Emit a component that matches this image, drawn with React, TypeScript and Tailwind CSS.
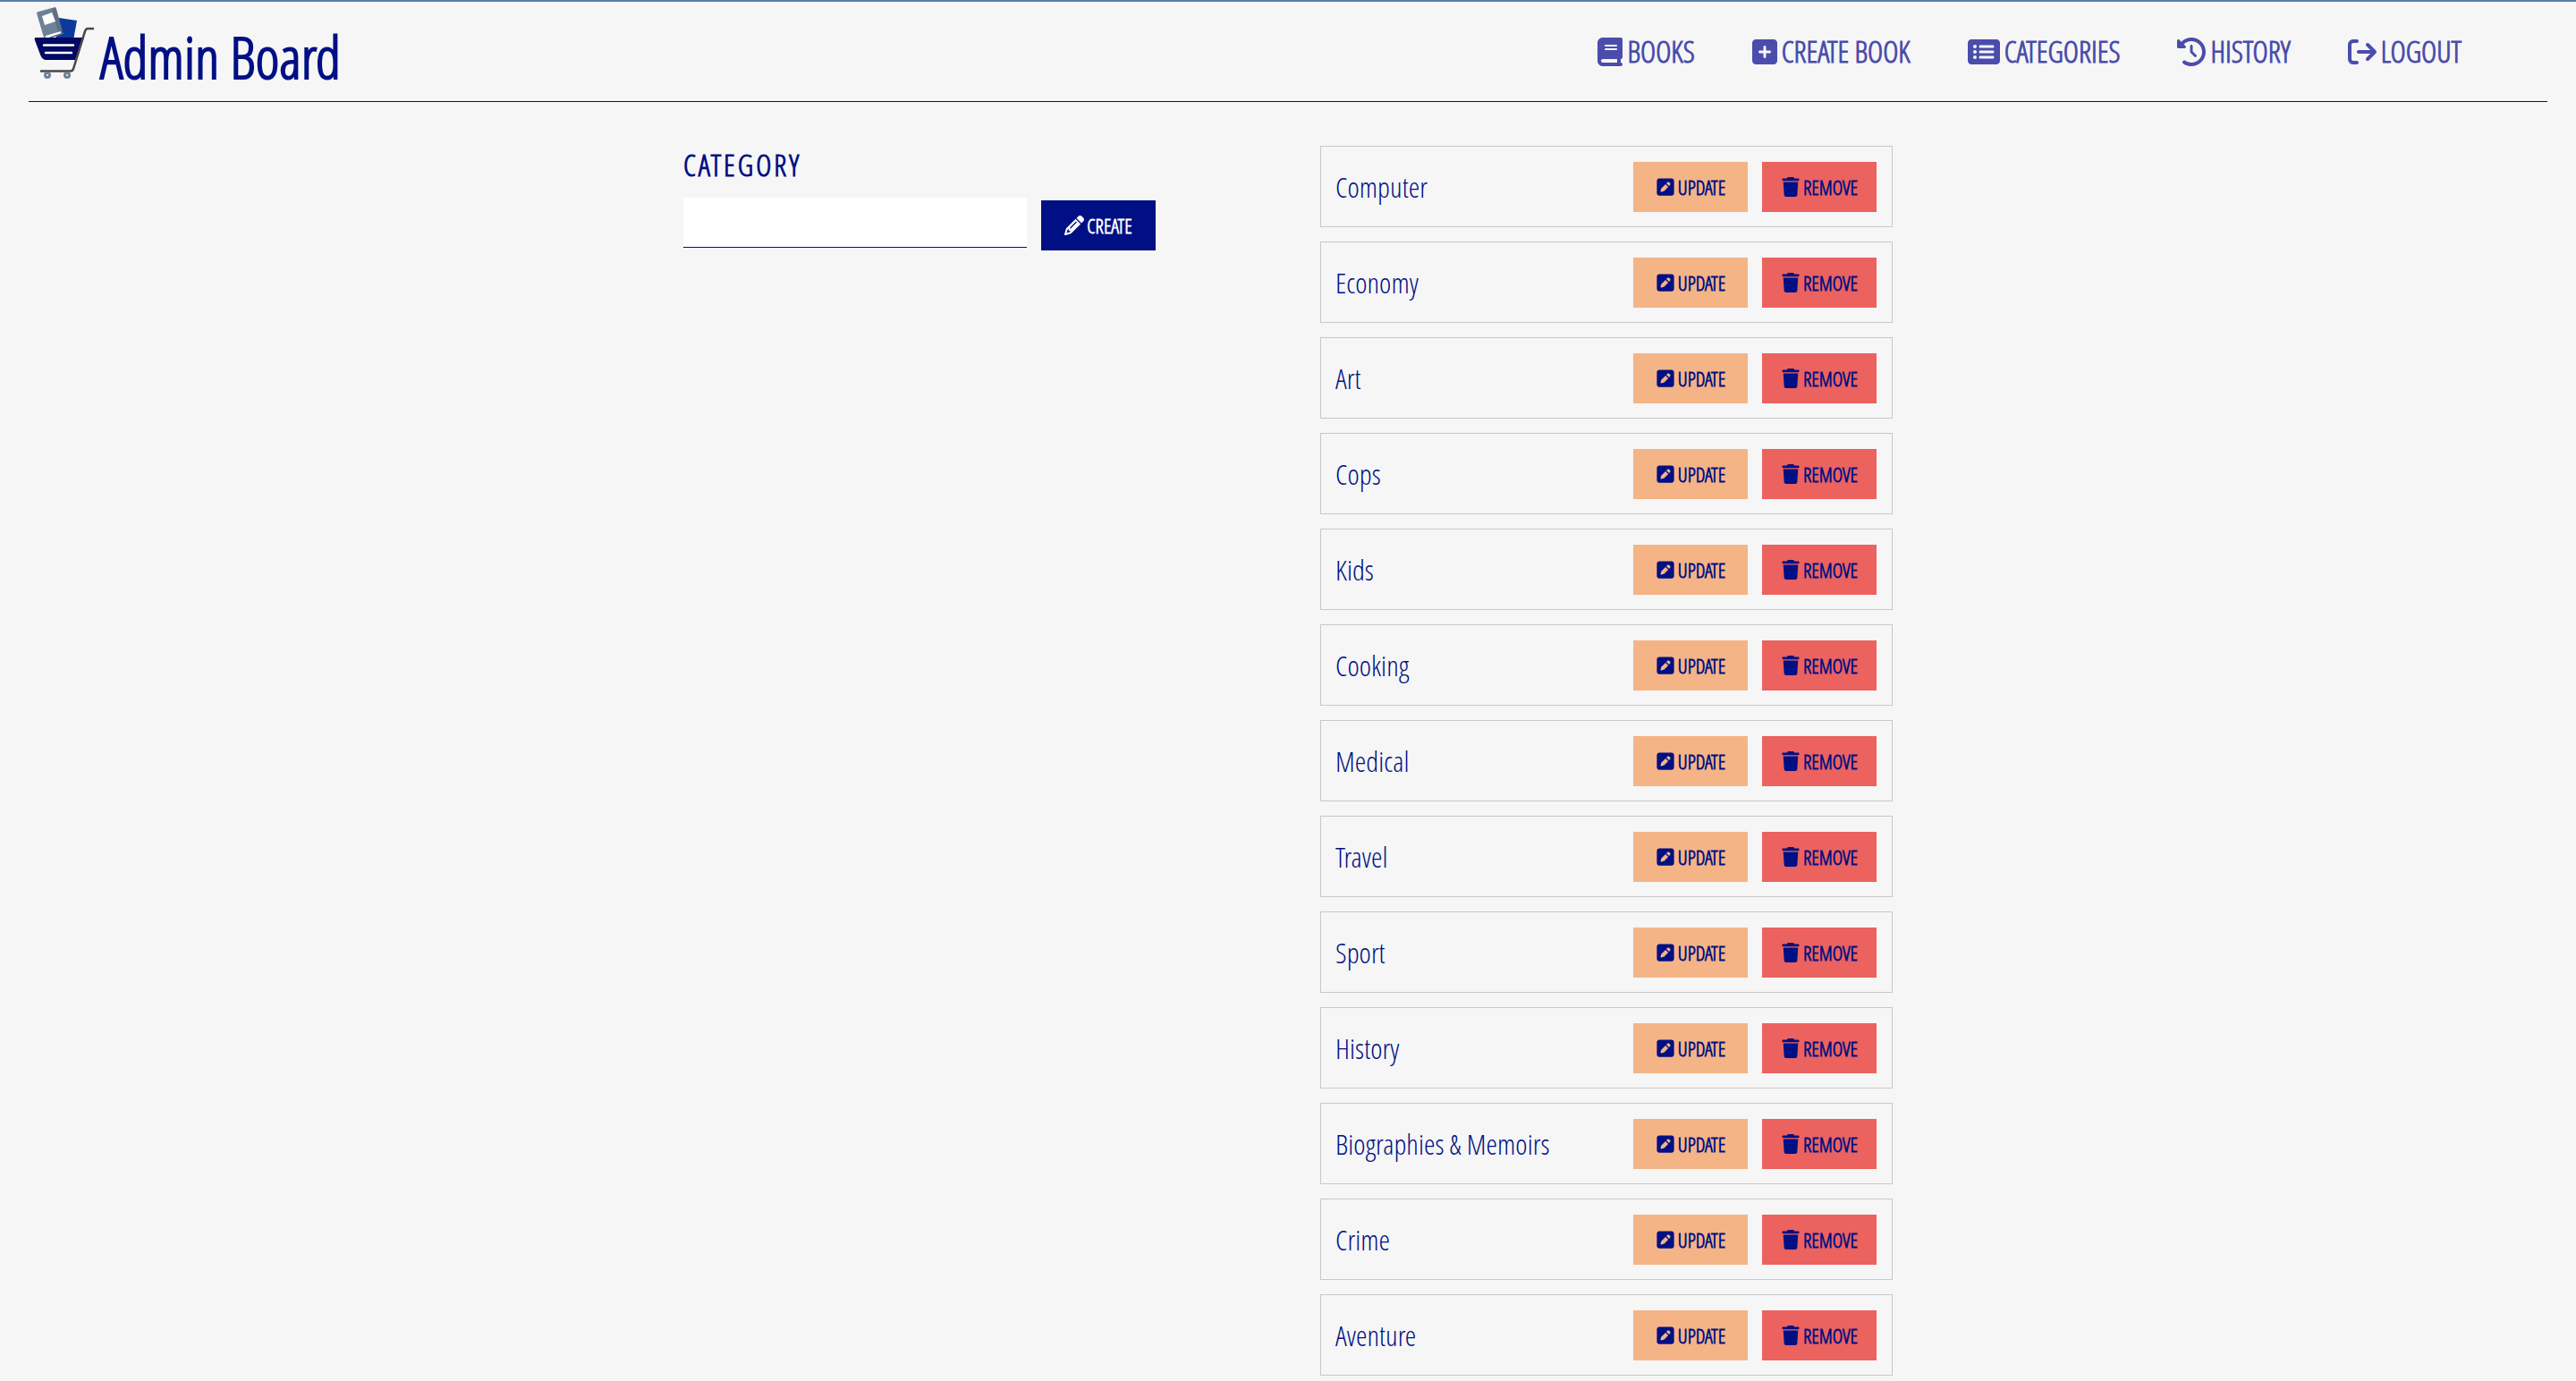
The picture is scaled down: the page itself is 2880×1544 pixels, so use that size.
import type { ReactNode } from "react";
import {
  FaArrowRightFromBracket,
  FaBook,
  FaClockRotateLeft,
  FaPencil,
  FaSquarePen,
  FaSquarePlus,
  FaTrash,
} from "react-icons/fa6";

function ListIcon() {
  return (
    <svg viewBox="0 0 576 512" className="h-8 w-9" fill="currentColor" aria-hidden="true">
      <path d="M0 96C0 60.7 28.7 32 64 32H512c35.3 0 64 28.7 64 64V416c0 35.3-28.7 64-64 64H64c-35.3 0-64-28.7-64-64V96zM128 288a32 32 0 1 0 0-64 32 32 0 1 0 0 64zm32-128a32 32 0 1 0 -64 0 32 32 0 1 0 64 0zM128 384a32 32 0 1 0 0-64 32 32 0 1 0 0 64zm96-248c-13.3 0-24 10.7-24 24s10.7 24 24 24H448c13.3 0 24-10.7 24-24s-10.7-24-24-24H224zm0 96c-13.3 0-24 10.7-24 24s10.7 24 24 24H448c13.3 0 24-10.7 24-24s-10.7-24-24-24H224zm0 96c-13.3 0-24 10.7-24 24s10.7 24 24 24H448c13.3 0 24-10.7 24-24s-10.7-24-24-24H224z" />
    </svg>
  );
}

const navItems: { label: string; icon: ReactNode }[] = [
  { label: "BOOKS", icon: <FaBook className="h-8 w-7" /> },
  { label: "CREATE BOOK", icon: <FaSquarePlus className="h-8 w-7" /> },
  { label: "CATEGORIES", icon: <ListIcon /> },
  { label: "HISTORY", icon: <FaClockRotateLeft className="h-8 w-8" /> },
  { label: "LOGOUT", icon: <FaArrowRightFromBracket className="h-8 w-8" /> },
];

const categories = [
  "Computer",
  "Economy",
  "Art",
  "Cops",
  "Kids",
  "Cooking",
  "Medical",
  "Travel",
  "Sport",
  "History",
  "Biographies & Memoirs",
  "Crime",
  "Aventure",
];

function CartLogo() {
  return (
    <svg viewBox="0 0 68 82" className="h-[82px] w-[68px]" aria-hidden="true">
      <path d="M28 13 48 16 44 38H24Z" fill="#0b3a9c" />
      <path d="M18 3 23 1Q25 1 25 3L32 28 26 31Z" fill="#5f7082" />
      <path d="M3 8Q3 6 5 6L20 2 27 29 11 35Z" fill="#6f8196" />
      <path d="M9 11 20 7 24 17 12 21Z" fill="#fff" />
      <path d="M13 33 30 28 31 31 21 35H13Z" fill="#fff" />
      <path d="M18 35 33 30" stroke="#5f7082" strokeWidth="1.5" />
      <path d="M2 35H56L46 60H14Q9 60 7 54L1 38Q0 35 2 35Z" fill="#020863" />
      <path d="M11 43.5H44M13 52H42" stroke="#fff" strokeWidth="2.5" strokeLinecap="round" />
      <path
        d="M66 25H60Q58 25 57 28L44 70Q43 72.5 41 72.5H8"
        fill="none"
        stroke="#4a4747"
        strokeWidth="2.5"
        strokeLinecap="round"
      />
      <circle cx="15" cy="77" r="2.5" fill="#fff" stroke="#6f8196" strokeWidth="3" />
      <circle cx="37" cy="77" r="2.5" fill="#fff" stroke="#6f8196" strokeWidth="3" />
    </svg>
  );
}

function ActionButton({ tone, icon, children }: { tone: string; icon: ReactNode; children: ReactNode }) {
  return (
    <button
      type="button"
      className={`flex h-14 w-32 items-center justify-center gap-[3px] text-[22px] leading-none font-bold ${tone}`}
    >
      {icon}
      <span>{children}</span>
    </button>
  );
}

export default function App() {
  return (
    <div className="min-h-screen border-t-2 border-[#5a7db0] bg-[#f6f6f6] font-['Open_Sans_Condensed_Light','Open_Sans',sans-serif] text-[#001084]">
      <header className="mx-8 flex h-28 items-start justify-between border-b border-[#001084]">
        <a href="#home" className="flex items-start gap-1.5 pt-[5px] pl-1.5">
          <CartLogo />
          <h1 className="text-[64px] leading-[114px] font-bold">Admin Board</h1>
        </a>
        <nav className="mr-24 flex gap-16 pt-8">
          {navItems.map(({ label, icon }) => (
            <a key={label} href="#nav" className="flex items-center gap-[5px] text-[33px] leading-12 font-bold text-[#4a4dab]">
              {icon}
              <span>{label}</span>
            </a>
          ))}
        </nav>
      </header>

      <main className="mt-12 flex items-start justify-center gap-46">
        <form className="w-132">
          <label htmlFor="category" className="block text-[33px] leading-[45px] font-bold tracking-[3px]">
            CATEGORY
          </label>
          <div className="mt-3.5 flex items-end gap-4">
            <input
              id="category"
              type="text"
              className="mb-[3px] h-14 w-96 border-b border-[#001084] bg-white px-4 text-[32px] outline-none"
            />
            <ActionButton tone="bg-[#001084] text-white" icon={<FaPencil className="h-[22px] w-auto" />}>
              CREATE
            </ActionButton>
          </div>
        </form>

        <ul className="mt-px flex w-160 flex-col gap-4">
          {categories.map((name) => (
            <li key={name} className="flex h-[91px] items-center gap-4 border border-[#c8c8c8] pr-[17px] pl-4">
              <span className="flex-1 text-[32px]">{name}</span>
              <ActionButton tone="bg-[#f5b486]" icon={<FaSquarePen className="h-[22px] w-auto" />}>
                UPDATE
              </ActionButton>
              <ActionButton tone="bg-[#eb625f]" icon={<FaTrash className="h-[22px] w-auto" />}>
                REMOVE
              </ActionButton>
            </li>
          ))}
        </ul>
      </main>
    </div>
  );
}
